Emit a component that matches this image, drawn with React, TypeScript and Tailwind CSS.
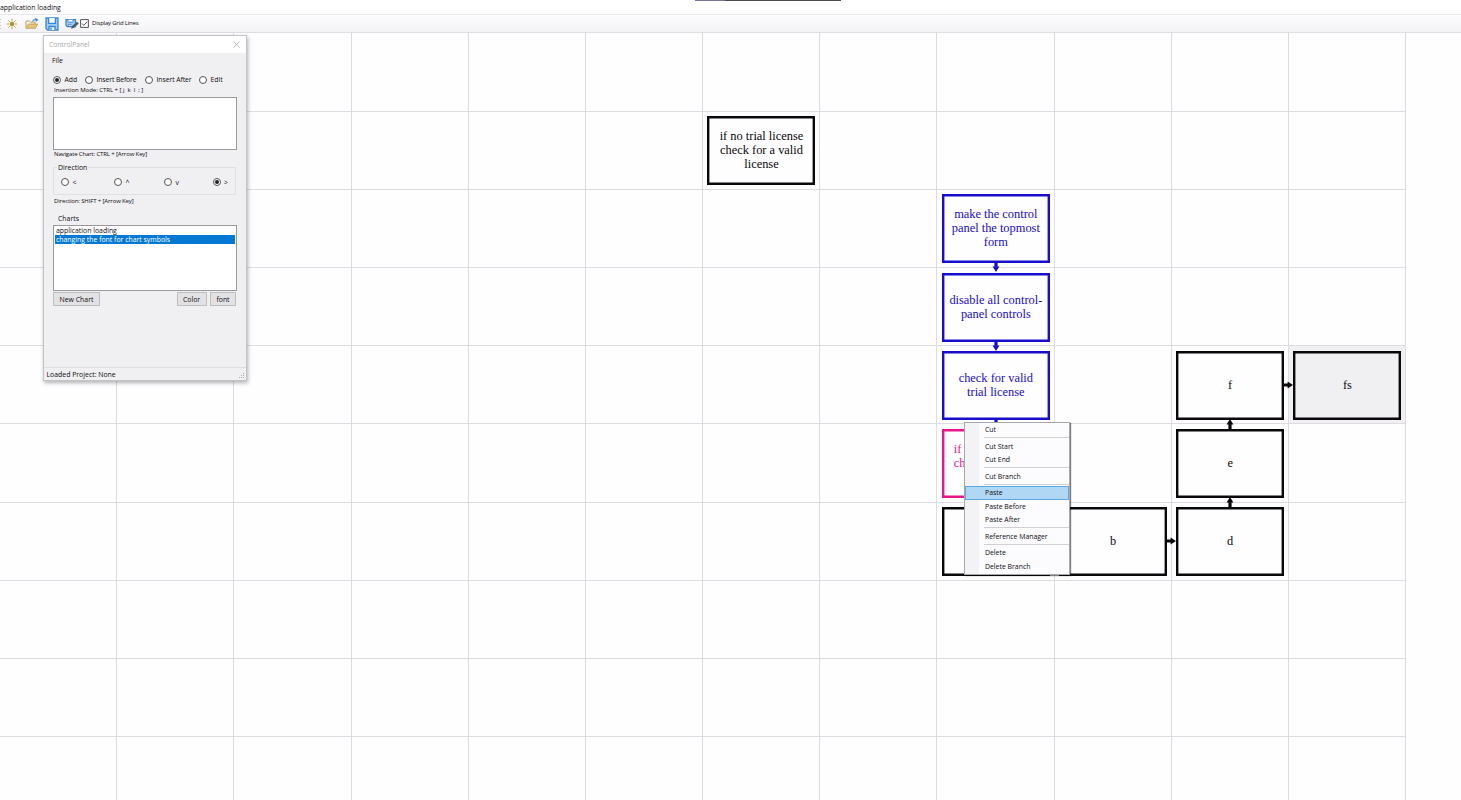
import type { ReactElement, ReactNode } from 'react';
import { clsx } from 'clsx';

const COLS = 12;
const ROWS = 10;
const CELL_W = 117.18;
const CELL_H = 78.2;

type Direction = 'up' | 'down' | 'right';

interface ChartNode {
  id: string;
  col: number;
  row: number;
  text: string[];
  color: string;
  next?: Direction;
  selected?: boolean;
  align?: 'left';
}

const BLUE = '#170dcb';
const BLACK = '#0a080c';
const PINK = '#e8168c';

const nodes: ChartNode[] = [
  { id: 'if', col: 6, row: 1, text: ['if no trial license', 'check for a valid', 'license'], color: BLACK },
  { id: 'top', col: 8, row: 2, text: ['make the control', 'panel the topmost', 'form'], color: BLUE, next: 'down' },
  { id: 'disable', col: 8, row: 3, text: ['disable all control-', 'panel controls'], color: BLUE, next: 'down' },
  { id: 'check', col: 8, row: 4, text: ['check for valid', 'trial license'], color: BLUE, next: 'down' },
  { id: 'cut', col: 8, row: 5, text: ['if', 'ch', '\u00a0'], color: PINK, align: 'left' },
  { id: 'a', col: 8, row: 6, text: [], color: BLACK },
  { id: 'b', col: 9, row: 6, text: ['b'], color: BLACK, next: 'right' },
  { id: 'd', col: 10, row: 6, text: ['d'], color: BLACK, next: 'up' },
  { id: 'e', col: 10, row: 5, text: ['e'], color: BLACK, next: 'up' },
  { id: 'f', col: 10, row: 4, text: ['f'], color: BLACK, next: 'right' },
  { id: 'fs', col: 11, row: 4, text: ['fs'], color: BLACK, selected: true },
];

const menu = [
  ['Cut'],
  ['Cut Start', 'Cut End'],
  ['Cut Branch'],
  ['Paste', 'Paste Before', 'Paste After'],
  ['Reference Manager'],
  ['Delete', 'Delete Branch'],
];

const arrowPlace: Record<Direction, string> = {
  up: 'left-[49px] -top-[10px]',
  down: 'left-[49px] top-[68px] rotate-180',
  right: 'left-[107px] top-[29.3px] rotate-90',
};

function Arrow({ dir }: { dir: Direction }): ReactElement {
  return (
    <svg viewBox="0 0 10 10" className={clsx('absolute size-[10px]', arrowPlace[dir])}>
      <path d="M3.4 10.5V5.4H1.6L5 0l3.4 5.4H6.6v5.1z" fill="currentColor" />
    </svg>
  );
}

function NodeBox({ node }: { node: ChartNode }): ReactElement {
  return (
    <div
      className={clsx(
        'absolute flex h-[69px] w-[108px] flex-col justify-center pb-px font-["Liberation_Serif",serif] text-[12.4px] leading-[14px] shadow-[inset_0_0_0_2.4px_currentColor]',
        node.align === 'left' ? 'items-start pl-[12px]' : 'items-center',
        node.selected ? 'bg-[#f0eff1]' : 'bg-[#fefdff]'
      )}
      style={{
        left: node.col * CELL_W + 4.4,
        top: node.row * CELL_H + 4.9,
        color: node.color,
      }}
    >
      {node.text.map((line, i) => (
        <span key={i} className="whitespace-nowrap">
          {line}
        </span>
      ))}
      {node.next && <Arrow dir={node.next} />}
    </div>
  );
}

function Chart(): ReactElement {
  const cells = Array.from({ length: COLS * ROWS }, (_, i) => i);
  return (
    <div className="relative shrink-0">
      <div className="grid w-[1406.16px] auto-rows-[78.2px] grid-cols-[repeat(12,117.18px)] pt-[0.4px]">
        {cells.map((i) => (
          <div
            key={i}
            className={clsx(
              'border-r border-b border-[#e0dae3]',
              i === 4 * COLS + 11 && 'bg-[#f0eff1]'
            )}
          />
        ))}
      </div>
      {nodes.map((n) => (
        <NodeBox key={n.id} node={n} />
      ))}
    </div>
  );
}

function Radio({ label, checked, className }: { label: string; checked?: boolean; className?: string }): ReactElement {
  return (
    <label className={clsx('absolute flex items-center gap-[3.5px] whitespace-nowrap', className)}>
      <span className="flex size-[8px] items-center justify-center rounded-full border border-[#555] bg-white">
        {checked && <span className="size-[4px] rounded-full bg-[#222]" />}
      </span>
      <span>{label}</span>
    </label>
  );
}

function PanelButton({ children, className }: { children: ReactNode; className: string }): ReactElement {
  return (
    <button type="button" className={clsx('h-[14px] border border-[#bfbdc0] bg-[#e2e1e3] leading-[13px]', className)}>
      {children}
    </button>
  );
}

function ControlPanel(): ReactElement {
  return (
    <div className="absolute top-[35px] left-[43px] flex h-[346px] w-[204px] flex-col border border-[#c4c2c6] bg-[#f0eff1] text-[6.9px] leading-[9px] text-[#0f0d11] shadow-[1px_2px_4px_rgba(0,0,0,0.3)]">
      <div className="flex h-[17px] items-center justify-between bg-white pr-[6.5px] pl-[5px] text-[#aaa8ac]">
        <span className="text-[6.7px]">ControlPanel</span>
        <svg viewBox="0 0 7 7" className="size-[7px]" stroke="currentColor" strokeWidth="0.8">
          <path d="M.5.5l6 6M6.5.5l-6 6" />
        </svg>
      </div>
      <div className="flex h-[15px] items-center pl-[8px]">File</div>
      <div className="relative mt-[7px] h-[10px] text-[6.8px]">
        <Radio label="Add" checked className="left-[9px]" />
        <Radio label="Insert Before" className="left-[41px] tracking-[-0.1px]" />
        <Radio label="Insert After" className="left-[101px] tracking-[-0.05px]" />
        <Radio label="Edit" className="left-[155px]" />
      </div>
      <div className="h-[11px] pt-[0.5px] pl-[10px] text-[6px] tracking-[-0.03px] whitespace-pre">Insertion Mode: CTRL + [ j  k  l  ; ]</div>
      <div className="mt-px ml-[9px] h-[53px] w-[184px] border border-[#9b999d] bg-white" />
      <div className="h-[9px] pl-[10px] text-[6px] tracking-[-0.13px]">Navigate Chart: CTRL + [Arrow Key]</div>
      <fieldset className="relative mt-[8px] ml-[9px] h-[28px] w-[183px] border border-[#e0dfe1]">
        <span className="absolute -top-[5px] left-[3px] bg-[#f0eff1] px-px">Direction</span>
        <Radio label="<" className="top-[9.5px] left-[7px]" />
        <Radio label="^" className="top-[9.5px] left-[60px]" />
        <Radio label="v" className="top-[9.5px] left-[110px]" />
        <Radio label=">" checked className="top-[9.5px] left-[158.5px]" />
      </fieldset>
      <div className="mt-px h-[9px] pt-[0.5px] pl-[10px] text-[6px] tracking-[-0.13px]">Direction: SHIFT + [Arrow Key]</div>
      <div className="mt-[9px] h-[11px] pl-[14px]">Charts</div>
      <div className="ml-[9px] h-[66px] w-[184px] border border-[#9b999d] bg-white px-px">
        <div className="pl-px">application loading</div>
        <div className="bg-[#0578d4] pl-px text-white">changing the font for chart symbols</div>
      </div>
      <div className="mt-px flex pl-[9px]">
        <PanelButton className="w-[47px]">New Chart</PanelButton>
        <PanelButton className="ml-[76.5px] w-[30px]">Color</PanelButton>
        <PanelButton className="ml-[3.5px] w-[26px]">font</PanelButton>
      </div>
      <div className="mt-auto flex h-[13px] items-center justify-between border-t border-[#dddcde] pl-[2.5px]">
        <span>Loaded Project: None</span>
        <svg viewBox="0 0 8 8" className="size-[8px] self-end" fill="#aaa8ac">
          <path d="M5 1h1v1H5zM5 3h1v1H5zM5 5h1v1H5zM3 3h1v1H3zM3 5h1v1H3zM1 5h1v1H1z" />
        </svg>
      </div>
    </div>
  );
}

function ContextMenu(): ReactElement {
  return (
    <div className="absolute top-[422px] left-[964px] h-[153px] w-[106px] border border-[#a9a7ab] bg-[#fcfbfd] text-[6.9px] text-[#0f0d11] shadow-[1px_1px_1px_rgba(0,0,0,0.5)]">
      <div className="absolute inset-y-0 left-0 w-[14px] bg-[#f3f2f5]" />
      <div className="relative">
        {menu.map((group, gi) => (
          <div key={gi}>
            {gi > 0 && (
              <div className="flex h-[3.4px] items-center pl-[19px]">
                <div className="h-px w-full bg-[#d2d0d4]" />
              </div>
            )}
            {group.map((item) => (
              <div
                key={item}
                className={clsx(
                  'flex h-[13.3px] items-center pt-px pl-[20px]',
                  item === 'Paste' && 'bg-[#b0d8f4] outline outline-[#5fa8dc] -outline-offset-1'
                )}
              >
                {item}
              </div>
            ))}
          </div>
        ))}
      </div>
    </div>
  );
}

function Toolbar(): ReactElement {
  return (
    <div className="flex h-[19px] shrink-0 items-center border-t border-b border-t-[#e9e8eb] border-b-[#dfdde1] bg-linear-to-b from-[#fdfcfe] to-[#f3f2f5]">
      <svg viewBox="0 0 3 12" className="h-[12px] w-[3px]" fill="#c6c4c8">
        <path d="M0 1h1v1H0zM0 4h1v1H0zM0 7h1v1H0zM0 10h1v1H0z" />
      </svg>
      {/* new */}
      <svg viewBox="0 0 12 12" className="ml-[3px] size-[12px]" stroke="#c3a047" strokeWidth="1">
        <path d="M6 .8v2.4M6 8.8v2.4M.8 6h2.4M8.8 6h2.4M2.3 2.3l1.6 1.6M8.1 8.1l1.6 1.6M9.7 2.3L8.1 3.9M3.9 8.1L2.3 9.7" />
        <circle cx="6" cy="6" r="2.3" fill="#b8912c" stroke="none" />
      </svg>
      {/* open */}
      <svg viewBox="0 0 14 12" className="ml-[7px] h-[12px] w-[14px]" fill="none">
        <path d="M1 10V3h3.5l1 1.2H10V6" stroke="#c4a052" />
        <path d="M1 10.3L3.4 6h9.4l-2.4 4.3z" fill="#e6c47c" stroke="#c4a052" strokeWidth="0.9" />
        <path d="M7.5 3.4c.7-1.5 2.3-2 4-1.6M10.3.4l2.3 1.5-2 1.6" stroke="#3d8fd6" strokeWidth="1.1" />
      </svg>
      {/* save */}
      <svg viewBox="0 0 14 14" className="ml-[6px] size-[14px]" fill="none" stroke="#3a88d0" strokeWidth="1.3">
        <path d="M1 1h12v12H2.6L1 11.4z" fill="#9fcdf4" />
        <path d="M3.6 1v5.4h6.8V1M4 13V9.5h6V13" fill="#f5faff" />
        <path d="M6 10.5V13" />
      </svg>
      {/* save as */}
      <svg viewBox="0 0 15 12" className="ml-[6px] h-[12px] w-[15px]" fill="none">
        <path d="M1 1.7h9.5V8.6H2.2L1 7.4z" fill="#9fcdf4" stroke="#3a84cc" strokeWidth="1.2" />
        <path d="M3 1.7v2.4h5V1.7M3.4 8.6V6.4h3" fill="#fff" stroke="#3a84cc" strokeWidth="0.8" />
        <path d="M6 10.8l1-2.8 5-4.2 1.8 1.8-5 4.3z" fill="#4c5d70" />
      </svg>
      <svg viewBox="0 0 9 9" className="size-[9px]" fill="#fff" stroke="#444246" strokeWidth="0.9">
        <path d="M.6.6h7.8v7.8H.6z" />
        <path d="M2 4.5l1.8 1.9L7.2 2.6" fill="none" />
      </svg>
      <span className="ml-[3px] text-[6px] tracking-[-0.2px] whitespace-nowrap text-[#0f0d11]">Display Grid Lines</span>
    </div>
  );
}

export default function App(): ReactElement {
  return (
    <div className='relative flex h-[800px] w-[1461px] flex-col overflow-hidden bg-[#fefdff] font-["Open_Sans",sans-serif]'>
      <div className="flex h-[14px] shrink-0 items-center bg-white pt-[2px] text-[6.9px] text-[#0f0d11]">
        <span>application loading</span>
      </div>
      <div className="absolute top-0 left-[695px] flex h-px w-[146px]">
        <div className="w-[30px] bg-[#7d749c]" />
        <div className="flex-1 bg-[#4b484e]" />
      </div>
      <Toolbar />
      <Chart />
      <ControlPanel />
      <ContextMenu />
    </div>
  );
}
